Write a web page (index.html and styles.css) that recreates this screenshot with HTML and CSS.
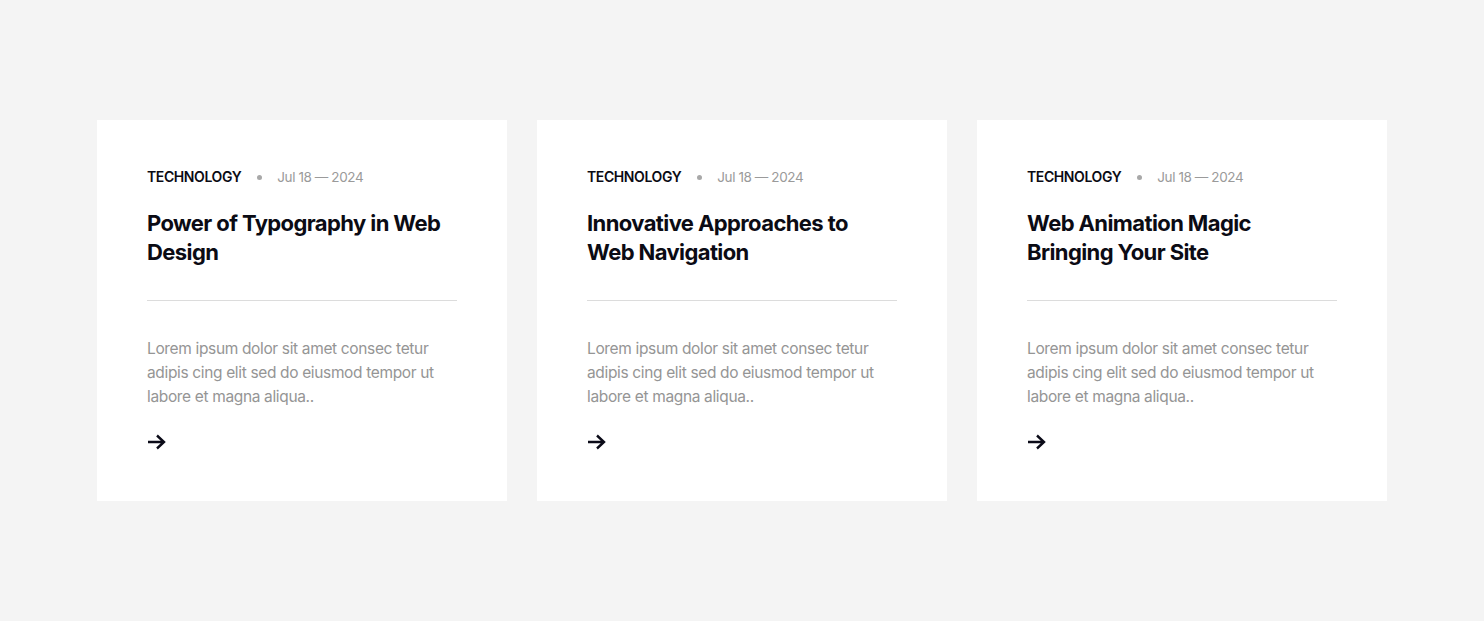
FILE: index.html
```html
<!DOCTYPE html>
<html>
<head>
<meta charset="utf-8">
<link rel="stylesheet" href="styles.css">
</head>
<body>
<div class="grid">
  <article class="card">
    <div class="meta"><span class="cat">TECHNOLOGY</span><span class="dot"></span><span class="date">Jul 18 — 2024</span></div>
    <h3 class="title">Power of Typography in Web Design</h3>
    <hr class="rule">
    <p class="text">Lorem ipsum dolor sit amet consec tetur adipis cing elit sed do eiusmod tempor ut labore et magna aliqua..</p>
    <a class="more" href="#"><svg width="20" height="16" viewBox="0 0 20 16"><path d="M1 8h16M10 1.5l7 6.5-7 6.5" fill="none" stroke="#0b0b18" stroke-width="2.4"/></svg></a>
  </article>
  <article class="card">
    <div class="meta"><span class="cat">TECHNOLOGY</span><span class="dot"></span><span class="date">Jul 18 — 2024</span></div>
    <h3 class="title">Innovative Approaches to Web Navigation</h3>
    <hr class="rule">
    <p class="text">Lorem ipsum dolor sit amet consec tetur adipis cing elit sed do eiusmod tempor ut labore et magna aliqua..</p>
    <a class="more" href="#"><svg width="20" height="16" viewBox="0 0 20 16"><path d="M1 8h16M10 1.5l7 6.5-7 6.5" fill="none" stroke="#0b0b18" stroke-width="2.4"/></svg></a>
  </article>
  <article class="card">
    <div class="meta"><span class="cat">TECHNOLOGY</span><span class="dot"></span><span class="date">Jul 18 — 2024</span></div>
    <h3 class="title">Web Animation Magic Bringing Your Site</h3>
    <hr class="rule">
    <p class="text">Lorem ipsum dolor sit amet consec tetur adipis cing elit sed do eiusmod tempor ut labore et magna aliqua..</p>
    <a class="more" href="#"><svg width="20" height="16" viewBox="0 0 20 16"><path d="M1 8h16M10 1.5l7 6.5-7 6.5" fill="none" stroke="#0b0b18" stroke-width="2.4"/></svg></a>
  </article>
</div>
</body>
</html>
```
FILE: styles.css
```css
html, body {
  margin: 0;
  padding: 0;
  background: #f4f4f4;
  font-family: Inter, "Noto Sans", sans-serif;
}
.grid {
  width: 1290px;
  margin: 120px auto 0;
  display: grid;
  grid-template-columns: repeat(3, 410px);
  gap: 30px;
}
.card {
  background: #fff;
  height: 381px;
  box-sizing: border-box;
  padding: 47px 50px 50px;
  display: flex;
  flex-direction: column;
}
.meta {
  display: flex;
  align-items: center;
  font-size: 14px;
  line-height: 20px;
}
.cat {
  color: #0b0b14;
  font-weight: 600;
  letter-spacing: -0.4px;
}
.dot {
  width: 5px;
  height: 5px;
  border-radius: 50%;
  background: #a8a8a8;
  margin: 0 15px 0 16px;
}
.date {
  color: #9a9a9a;
  font-size: 13.5px;
  letter-spacing: -0.4px;
}
.title {
  margin: 22px 0 0;
  font-size: 22px;
  line-height: 29px;
  font-weight: 700;
  color: #0b0b14;
  letter-spacing: -0.6px;
}
.rule {
  margin: 33px 0 0;
  border: 0;
  border-top: 1px solid #dcdcdc;
  height: 0;
}
.text {
  margin: 36px 0 0;
  font-size: 15.5px;
  line-height: 24px;
  color: #959595;
  letter-spacing: -0.35px;
}
.more {
  margin-top: 25px;
  display: block;
  width: 20px;
  height: 16px;
}
.more svg { display: block; }
```
